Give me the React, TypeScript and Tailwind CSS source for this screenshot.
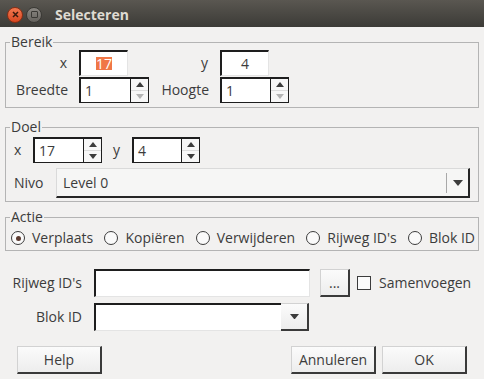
import type { ReactNode } from "react";

function Up({ disabled }: { disabled?: boolean }) {
  return (
    <svg width="8" height="5" viewBox="0 0 8 5">
      <path d="M0 5 L4 0 L8 5 Z" fill={disabled ? "#b4b4b4" : "#3c3c3c"} />
    </svg>
  );
}

function Down({ disabled, w = 8 }: { disabled?: boolean; w?: number }) {
  return (
    <svg width={w} height={w / 2 + 1} viewBox={`0 0 ${w} ${w / 2 + 1}`}>
      <path d={`M0 0 L${w} 0 L${w / 2} ${w / 2 + 1} Z`} fill={disabled ? "#b4b4b4" : "#3c3c3c"} />
    </svg>
  );
}

function TextField({ className, children }: { className: string; children?: ReactNode }) {
  return (
    <div
      className={`h-[26px] flex items-center justify-center bg-white border-t-2 border-l-2 border-r border-b border-t-[#1e1e1e] border-l-[#1e1e1e] border-r-[#e4e4e4] border-b-[#e4e4e4] ${className}`}
    >
      {children}
    </div>
  );
}

function Spinner({
  value,
  className,
  downDisabled,
}: {
  value: string;
  className: string;
  downDisabled?: boolean;
}) {
  return (
    <div
      className={`h-[26px] flex bg-white border-t-2 border-l-2 border-r border-b border-[#1e1e1e] ${className}`}
    >
      <div className="flex-1 flex items-center pl-[4px]">{value}</div>
      <div className="w-[18px] border-l border-[#1e1e1e] flex flex-col bg-[#f7f7f7]">
        <div className="flex-1 flex items-center justify-center border-b border-[#dcdcdc]">
          <Up />
        </div>
        <div className="flex-1 flex items-center justify-center">
          <Down disabled={downDisabled} />
        </div>
      </div>
    </div>
  );
}

function Radio({ label, checked }: { label: string; checked?: boolean }) {
  return (
    <label className="flex items-center gap-[7px]">
      <span className="w-[14px] h-[14px] rounded-full border border-[#3c3c3c] bg-[#fafafa] flex items-center justify-center">
        {checked && <span className="w-[5px] h-[5px] rounded-full bg-[#5c3b30]" />}
      </span>
      <span>{label}</span>
    </label>
  );
}

function Button({ label, className }: { label: string; className: string }) {
  return (
    <button
      type="button"
      className={`h-[28px] flex items-center justify-center bg-gradient-to-b from-[#fbfbfb] to-[#ededed] border-t border-l border-t-[#d2d2d2] border-l-[#d2d2d2] border-r-2 border-b-2 border-r-[#3a3a3a] border-b-[#3a3a3a] ${className}`}
    >
      {label}
    </button>
  );
}

export default function App() {
  return (
    <div className="w-[484px] h-[379px] bg-[#f2f1f0] flex flex-col text-[14px] leading-[16px] text-[#3c3c3c] font-['Open_Sans','Noto_Sans',sans-serif] overflow-hidden">
      {/* title bar */}
      <div className="h-[27px] shrink-0 flex items-center pl-[7px] pt-[2px] bg-gradient-to-b from-[#5a5751] to-[#3c3b37]">
        <div className="w-[16px] h-[16px] rounded-full bg-gradient-to-b from-[#f3784f] to-[#d9461f] border border-[#8a2e14] flex items-center justify-center">
          <svg width="7" height="7" viewBox="0 0 7 7">
            <path d="M1 1 L6 6 M6 1 L1 6" stroke="#3a1a0e" strokeWidth="1.5" />
          </svg>
        </div>
        <div className="ml-[3px] w-[16px] h-[16px] rounded-full bg-gradient-to-b from-[#8a8782] to-[#65625d] border border-[#3a3935] flex items-center justify-center">
          <div className="w-[7px] h-[7px] border border-[#3a3935] rounded-[1px]" />
        </div>
        <span className="ml-[13px] text-[14px] font-bold text-[#dfdbd2]">Selecteren</span>
      </div>

      <div className="flex-1 flex flex-col px-[5px]">
        {/* Bereik */}
        <fieldset className="mt-[7px] border border-[#b4b4b4] pb-[4px]">
          <legend className="ml-[4px] px-[1px] leading-[16px]">Bereik</legend>
          <div className="grid grid-cols-[73px_70px_71px_70px] gap-y-[1px]">
            <div className="h-[26px] flex items-center justify-end pr-[12px]">x</div>
            <div>
              <TextField className="w-[49px]">
                <span className="inline-block h-[13px] leading-[13px] bg-[#f07746] text-white">17</span>
              </TextField>
            </div>
            <div className="h-[26px] flex items-center justify-end pr-[12px]">y</div>
            <div>
              <TextField className="w-[49px]">4</TextField>
            </div>
            <div className="h-[26px] flex items-center justify-end pr-[11px]">Breedte</div>
            <div>
              <Spinner value="1" className="w-[70px]" downDisabled />
            </div>
            <div className="h-[26px] flex items-center justify-end pr-[11px]">Hoogte</div>
            <div>
              <Spinner value="1" className="w-[69px]" downDisabled />
            </div>
          </div>
        </fieldset>

        {/* Doel */}
        <fieldset className="mt-[11px] border border-[#b4b4b4] pt-[2px] pb-[3px]">
          <legend className="ml-[4px] px-[1px] leading-[16px]">Doel</legend>
          <div className="flex items-center pl-[8px]">
            <span className="w-[19px]">x</span>
            <Spinner value="17" className="w-[69px]" />
            <span className="ml-[11px] w-[19px]">y</span>
            <Spinner value="4" className="w-[68px]" />
          </div>
          <div className="mt-[5px] flex items-center pl-[8px]">
            <span className="w-[42px]">Nivo</span>
            <div className="w-[414px] h-[30px] flex items-center bg-[#f6f6f5] border-t border-l border-t-[#dadada] border-l-[#dadada] border-r-2 border-b-2 border-r-[#262626] border-b-[#262626]">
              <span className="flex-1 pl-[6px]">Level 0</span>
              <div className="w-[22px] h-[20px] border-l border-[#a8a8a8] flex items-center justify-center">
                <Down w={10} />
              </div>
            </div>
          </div>
        </fieldset>

        {/* Actie */}
        <fieldset className="mt-[7px] border border-[#b4b4b4] pt-[1px]">
          <legend className="ml-[4px] px-[1px] leading-[16px]">Actie</legend>
          <div className="h-[24px] flex items-center justify-between pl-[5px] pr-[3px]">
            <Radio label="Verplaats" checked />
            <Radio label="Kopiëren" />
            <Radio label="Verwijderen" />
            <Radio label="Rijweg ID's" />
            <Radio label="Blok ID" />
          </div>
        </fieldset>

        {/* Rijweg ID's */}
        <div className="mt-[18px] h-[28px] flex items-center">
          <span className="w-[77px] text-right">Rijweg ID's</span>
          <div className="ml-[12px] w-[216px] h-[28px] bg-white border-t-2 border-l-2 border-r border-b border-t-[#1e1e1e] border-l-[#1e1e1e] border-r-[#e4e4e4] border-b-[#e4e4e4]" />
          <Button label="..." className="ml-[10px] w-[30px]" />
          <span className="ml-[7px] w-[14px] h-[14px] border border-[#3c3c3c] bg-[#fbfbfb]" />
          <span className="ml-[8px]">Samenvoegen</span>
        </div>

        {/* Blok ID */}
        <div className="mt-[6px] h-[28px] flex items-center">
          <span className="w-[77px] text-right">Blok ID</span>
          <div className="ml-[12px] w-[215px] h-[28px] flex">
            <div className="flex-1 bg-white border-t-2 border-l-2 border-b border-t-[#1e1e1e] border-l-[#1e1e1e] border-b-[#e4e4e4]" />
            <div className="w-[28px] flex items-center justify-center bg-gradient-to-b from-[#fbfbfb] to-[#ededed] border-t border-t-[#d2d2d2] border-r-2 border-b-2 border-r-[#3a3a3a] border-b-[#3a3a3a]">
              <Down w={9} />
            </div>
          </div>
        </div>

        {/* buttons */}
        <div className="mt-[15px] flex items-center justify-between px-[12px]">
          <Button label="Help" className="w-[85px]" />
          <div className="flex gap-[6px]">
            <Button label="Annuleren" className="w-[85px]" />
            <Button label="OK" className="w-[85px]" />
          </div>
        </div>
      </div>
    </div>
  );
}
